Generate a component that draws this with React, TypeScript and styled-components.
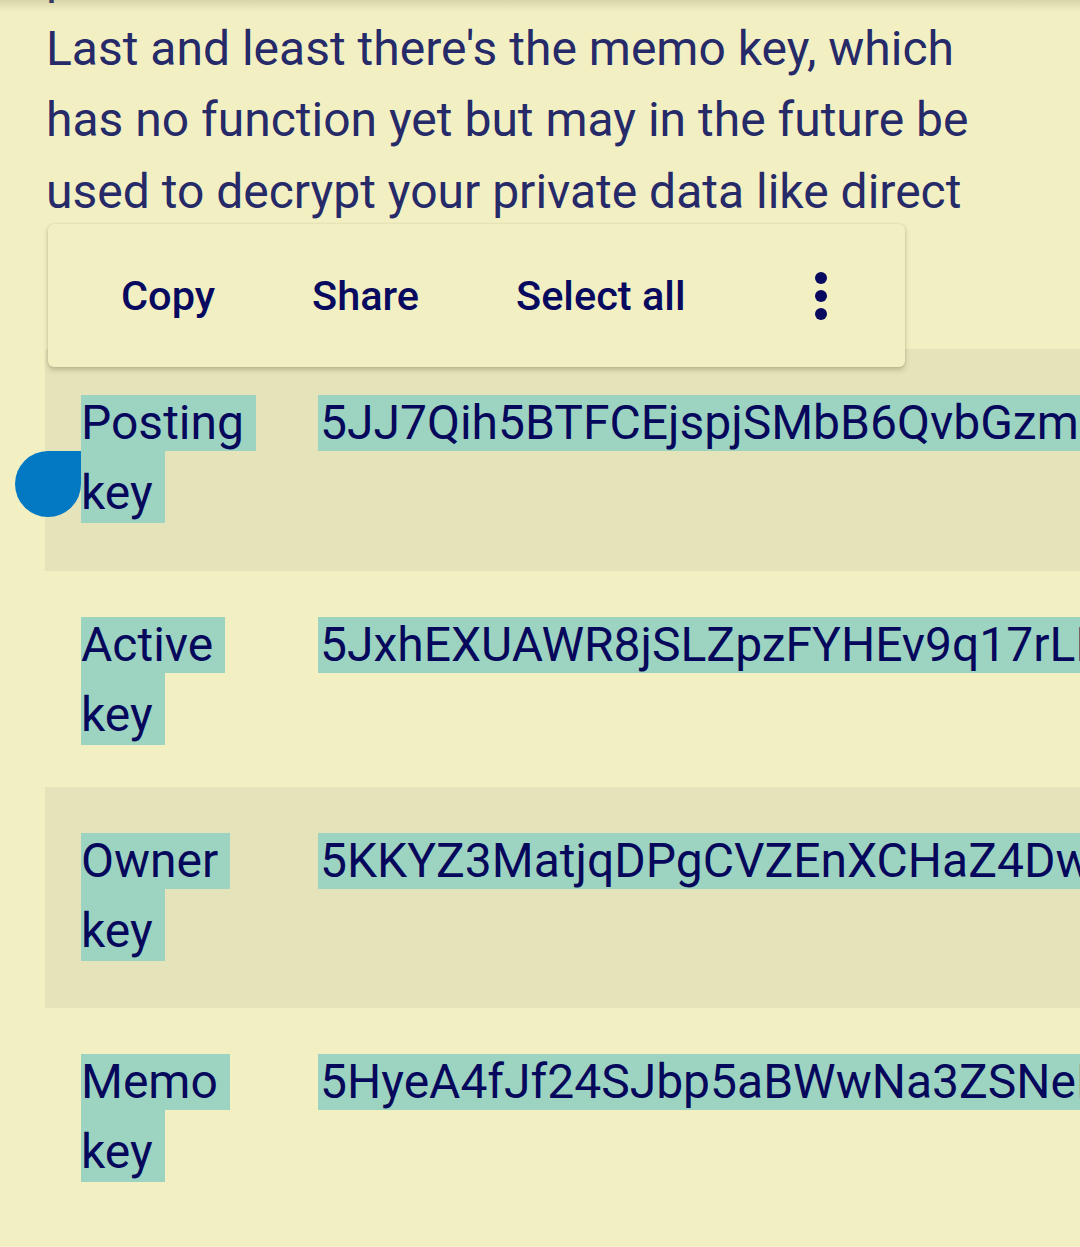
import React from "react";
import styled, { createGlobalStyle } from "styled-components";

const GlobalStyle = createGlobalStyle`
  html, body {
    margin: 0;
    padding: 0;
    background: #f2f0c3;
    overflow: hidden;
  }
  body {
    font-family: Roboto, "Liberation Sans", sans-serif;
  }
`;

const Page = styled.div`
  position: relative;
  width: 1080px;
  height: 1247px;
  overflow: hidden;
  background: #f2f0c3;
`;

const TopShadow = styled.div`
  position: absolute;
  top: 0;
  left: 0;
  right: 0;
  height: 12px;
  background: linear-gradient(rgba(120, 118, 80, 0.22), rgba(120, 118, 80, 0));
  pointer-events: none;
  z-index: 3;
`;

const Paragraph = styled.p`
  margin: -59px 0 0;
  padding: 0 46px;
  font-size: 48px;
  line-height: 71.5px;
  color: #262a68;
  white-space: pre;
`;

const KeyTable = styled.div`
  margin: 122px 0 0 45px;
  display: flex;
  flex-direction: column;
`;

const Row = styled.div<{ $h: number; $striped?: boolean }>`
  display: flex;
  height: ${p => p.$h}px;
  padding: 46px 0 0 36px;
  box-sizing: border-box;
  background: ${p => (p.$striped ? "#e5e3b9" : "transparent")};
`;

const LabelCell = styled.div`
  width: 237px;
  flex: none;
  font-size: 48px;
  color: #06085c;
`;

const Sel = styled.span<{ $pad?: boolean }>`
  display: block;
  width: fit-content;
  background: #9dd4c1;
  line-height: 56px;
  padding: ${p => (p.$pad ? "14px 12px 2px 0" : "0")};
  white-space: pre;
`;

const ValueCell = styled.div`
  flex: none;
  font-size: 48px;
  color: #06085c;
  white-space: pre;
`;

const ValueSel = styled.span`
  display: block;
  background: #9dd4c1;
  line-height: 56px;
  padding-left: 2px;
`;

const Toolbar = styled.div`
  position: absolute;
  left: 48px;
  top: 224px;
  width: 857px;
  height: 143px;
  box-sizing: border-box;
  display: flex;
  align-items: center;
  padding: 0 0 0 73px;
  background: #f2f0c3;
  border-radius: 6px;
  box-shadow: 0 3px 5px rgba(90, 88, 50, 0.3), 0 0 2px rgba(90, 88, 50, 0.2);
  z-index: 4;
`;

const MenuItem = styled.div<{ $w: number }>`
  width: ${p => p.$w}px;
  font-size: 41.5px;
  font-weight: 500;
  color: #070a5e;
`;

const MoreIcon = styled.svg`
  margin-left: 54px;
  display: block;
`;

const Handle = styled.div`
  position: absolute;
  left: 15px;
  top: 451px;
  width: 66px;
  height: 66px;
  background: #0279c2;
  border-radius: 50% 0 50% 50%;
  z-index: 2;
`;

const keys = [
  { label: "Posting", value: "5JJ7Qih5BTFCEjspjSMbB6QvbGzmeT8uK3Wq", h: 222 },
  { label: "Active", value: "5JxhEXUAWR8jSLZpzFYHEv9q17rLNbT2mA", h: 216 },
  { label: "Owner", value: "5KKYZ3MatjqDPgCVZEnXCHaZ4DwUq7pnR", h: 221 },
  { label: "Memo", value: "5HyeA4fJf24SJbp5aBWwNa3ZSNeRk2vLd", h: 222 },
];

export default function App() {
  return (
    <Page>
      <GlobalStyle />
      <TopShadow />
      <Paragraph>
        {"private memos.\n"}
        {"Last and least there's the memo key, which\n"}
        {"has no function yet but may in the future be\n"}
        {"used to decrypt your private data like direct"}
      </Paragraph>
      <KeyTable>
        {keys.map((k, i) => (
          <Row key={k.label} $h={k.h} $striped={i % 2 === 0}>
            <LabelCell>
              <Sel>{k.label} </Sel>
              <Sel $pad>key</Sel>
            </LabelCell>
            <ValueCell>
              <ValueSel>{k.value}</ValueSel>
            </ValueCell>
          </Row>
        ))}
      </KeyTable>
      <Toolbar>
        <MenuItem $w={191}>Copy</MenuItem>
        <MenuItem $w={204}>Share</MenuItem>
        <MenuItem $w={244}>Select all</MenuItem>
        <MoreIcon width="14" height="50" viewBox="0 0 14 50">
          <circle cx="7" cy="7" r="6" fill="#070a5e" />
          <circle cx="7" cy="25" r="6" fill="#070a5e" />
          <circle cx="7" cy="43" r="6" fill="#070a5e" />
        </MoreIcon>
      </Toolbar>
      <Handle />
    </Page>
  );
}
